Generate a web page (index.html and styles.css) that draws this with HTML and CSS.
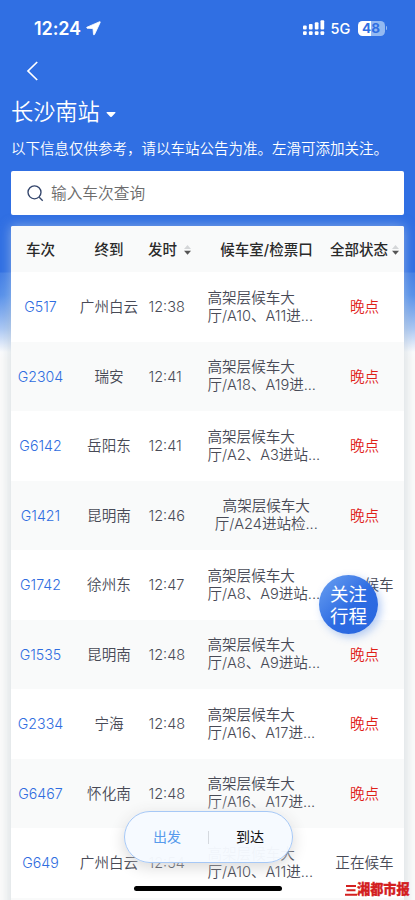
FILE: index.html
```html
<!DOCTYPE html>
<html lang="zh-CN">
<head>
<meta charset="utf-8">
<title>长沙南站</title>
<link rel="stylesheet" href="styles.css">
</head>
<body>
<div class="screen">
  <header class="top">
    <div class="statusbar">
      <span class="clock">12:24</span>
      <svg class="loc" width="15" height="15" viewBox="0 0 15 15"><path d="M13.6 0.7 L0.9 6.2 Q0.2 6.8 1 7.2 L7 7.6 L7.5 13.6 Q7.9 14.4 8.5 13.6 L14.2 1.4 Q14.4 0.4 13.6 0.7Z" fill="#fff" stroke="#fff" stroke-width=".8"/></svg>
      <svg class="signal" width="22" height="16" viewBox="0 0 22 16" fill="#fff"><rect x="0" y="5.5" width="3.7" height="4" rx="1"/><rect x="5.9" y="4" width="3.7" height="5.5" rx="1"/><rect x="11.8" y="2.2" width="3.7" height="7.3" rx="1"/><rect x="17.5" y="0.3" width="3.7" height="9.2" rx="1"/><rect x="0" y="11.2" width="3.7" height="3.8" rx="1"/><rect x="5.9" y="11.2" width="3.7" height="3.8" rx="1"/><rect x="11.8" y="11.2" width="3.7" height="3.8" rx="1"/><rect x="17.5" y="11.2" width="3.7" height="3.8" rx="1"/></svg>
      <span class="net">5G</span>
      <span class="battery"><b>4</b><b>8</b></span><i class="cap"></i>
    </div>
    <svg class="back" width="13" height="20" viewBox="0 0 13 20"><path d="M11.2 1 L2 10 L11.2 19" fill="none" stroke="#fff" stroke-width="1.7"/></svg>
    <div class="station"><span>长沙南站</span><svg width="10" height="6" viewBox="0 0 10 6"><path d="M1 0H9Q10 .3 9.3 1.1L5.7 4.7Q5 5.2 4.3 4.7L.7 1.1Q0 .3 1 0Z" fill="#fff"/></svg></div>
    <p class="notice">以下信息仅供参考，请以车站公告为准。左滑可添加关注。</p>
    <div class="search">
      <svg width="17" height="17" viewBox="0 0 17 17" fill="none" stroke="#33456b" stroke-width="1.35"><circle cx="7.5" cy="7.3" r="6.5"/><path d="M12.2 12.2L15.7 15.7"/></svg>
      <span>输入车次查询</span>
    </div>
  </header>
  <main class="board">
    <div class="head">
      <span>车次</span><span>终到</span><span class="sortable left">发时<svg class="sort" width="7" height="10" viewBox="0 0 7 10"><path d="M3.5 0L7 4H0Z" fill="#d4d6d8"/><path d="M0 5.7H7L3.5 9.7Z" fill="#555"/></svg></span><span>候车室/检票口</span><span class="sortable state">全部状态<svg class="sort" width="7" height="10" viewBox="0 0 7 10"><path d="M3.5 0L7 4H0Z" fill="#d4d6d8"/><path d="M0 5.7H7L3.5 9.7Z" fill="#555"/></svg></span>
    </div>
    <div class="row"><a>G517</a><span>广州白云</span><time>12:38</time><p>高架层候车大<br>厅/A10、A11进...</p><em>晚点</em></div>
    <div class="row"><a>G2304</a><span>瑞安</span><time>12:41</time><p>高架层候车大<br>厅/A18、A19进...</p><em>晚点</em></div>
    <div class="row"><a>G6142</a><span>岳阳东</span><time>12:41</time><p>高架层候车大<br>厅/A2、A3进站...</p><em>晚点</em></div>
    <div class="row"><a>G1421</a><span>昆明南</span><time>12:46</time><p class="mid">高架层候车大<br>厅/A24进站检...</p><em>晚点</em></div>
    <div class="row"><a>G1742</a><span>徐州东</span><time>12:47</time><p>高架层候车大<br>厅/A8、A9进站...</p><span>正在候车</span></div>
    <div class="row"><a>G1535</a><span>昆明南</span><time>12:48</time><p>高架层候车大<br>厅/A8、A9进站...</p><em>晚点</em></div>
    <div class="row"><a>G2334</a><span>宁海</span><time>12:48</time><p>高架层候车大<br>厅/A16、A17进...</p><em>晚点</em></div>
    <div class="row"><a>G6467</a><span>怀化南</span><time>12:48</time><p>高架层候车大<br>厅/A16、A17进...</p><em>晚点</em></div>
    <div class="row"><a>G649</a><span>广州白云</span><time>12:54</time><p>高架层候车大<br>厅/A10、A11进...</p><span>正在候车</span></div>
    <div class="row"></div>
  </main>
  <div class="follow">关注<br>行程</div>
  <div class="switch"><span class="on">出发</span><i></i><span>到达</span></div>
  <div class="home"></div>
  <div class="brand"><svg width="12" height="11" viewBox="0 0 12 11" fill="#d3201f"><path d="M1 0H11V2H1ZM1.5 4.3H10.5V6.3H1.5ZM0 8.8H12V10.8H0Z"/></svg><span>湘都市报</span></div>
</div>
</body>
</html>
```
FILE: styles.css
```css
* { box-sizing: border-box; }
body { margin: 0; font-family: Inter, "Noto Sans CJK SC", sans-serif; }
.screen {
  position: relative;
  width: 415px;
  height: 900px;
  overflow: hidden;
  background: linear-gradient(#306fe3 0, #306fe3 272px, #447fe6 273px, #5790ea 295px, #a9c7f5 328px, #fbfcfe 352px, #fbfbfb 360px);
}
.top { height: 226px; padding: 0 11px; color: #fff; }
.statusbar { height: 56px; display: flex; align-items: center; padding: 0 17px 0 23px; }
.clock { font-size: 18px; font-weight: 600; letter-spacing: -.1px; width: 48px; white-space: nowrap; }
.loc { margin-left: 4px; }
.signal { margin-left: auto; }
.net { font-size: 14.5px; font-weight: 500; margin-left: 6px; width: 27px; white-space: nowrap; }
.battery {
  width: 27px; height: 15px; border-radius: 4.5px; display: flex; justify-content: center; align-items: center;
  background: linear-gradient(90deg, #fff 48%, #94b9f1 48%);
  color: #306fe3; font-size: 13.5px;
}
.battery b { font-weight: 700; }
.cap { width: 1.5px; height: 4px; background: #94b9f1; margin-left: 1px; border-radius: 0 2px 2px 0; }
.back { display: block; margin: 5px 0 0 15px; }
.station { height: 32px; margin-top: 15px; display: flex; align-items: center; gap: 6px; font-size: 22.2px; font-weight: 350; line-height: 32px; }
.station svg { margin-top: 6px; }
.notice { margin: 12px 0 0; height: 20px; line-height: 18px; font-size: 14.5px; font-weight: 350; white-space: nowrap; }
.search { height: 44px; margin-top: 11px; background: #fff; border-radius: 2px; display: flex; align-items: center; padding-left: 16px; gap: 7px; color: #6c6c6c; font-size: 15.7px; font-weight: 350; }
.search span { margin-top: -1px; }
.board {
  width: 393px;
  margin-left: 11px;
  border-radius: 2px 2px 0 0;
  background: #fff;
  box-shadow: 0 0 12px rgba(205, 220, 228, .55), 0 80px 14px rgba(0, 0, 0, .1);
}
.head, .row { display: grid; grid-template-columns: 59px 78px 60px 117px 79px; align-items: center; justify-items: center; white-space: nowrap; }
.head { height: 46px; padding-bottom: 1px; background: #f9fafa; color: #2a2a2a; font-size: 14.5px; font-weight: 500; border-radius: 2px 2px 0 0; }
.sortable { display: flex; align-items: center; }
.sort { margin: 2px 0 0 7px; }
.state .sort { margin-left: 4px; }
.left, .row time { justify-self: start; }
.row { height: 69.5px; color: #484a56; font-size: 14.6px; font-weight: 350; }
.row:nth-child(odd) { background: #f9fafa; }
.row time { padding-left: .5px; font-size: 14.5px; }
.row a { color: #2f6de0; font-size: 14.2px; }
.row span, .row em { padding-bottom: 2px; }
.row p { margin: 0 0 0 -.5px; line-height: 18px; justify-self: start; letter-spacing: -.05px; }
.row .mid { justify-self: center; text-align: center; }
.row em { font-style: normal; color: #df2018; }
.follow {
  position: absolute; left: 319px; top: 575px; width: 59px; height: 59px; border-radius: 50%;
  background: linear-gradient(135deg, #6ca2f2, #2d6be2 55%, #2866df);
  box-shadow: 3px 3px 9px rgba(47, 111, 227, .35);
  color: #fff; text-align: center; font-size: 18.5px; line-height: 21.5px; padding-top: 9px;
}
.switch {
  position: absolute; left: 124px; top: 811px; width: 169px; height: 52px; border-radius: 26px;
  border: 1px solid #a6c8f6; background: rgba(246, 250, 255, .97);
  box-shadow: 0 4px 16px rgba(0, 0, 0, .16), 0 0 9px 4px rgba(255, 255, 255, .5);
  display: flex; align-items: center; justify-content: center; gap: 27px; font-size: 14px; color: #111;
}
.switch span { padding-bottom: 2px; }
.switch i { width: 1px; height: 13px; background: #d5d9df; }
.switch .on { color: #579aec; }
.home { position: absolute; left: 134px; top: 886px; width: 148px; height: 5px; border-radius: 3px; background: #000; }
.brand { position: absolute; left: 345px; top: 882px; height: 15px; display: flex; align-items: center; color: #d3201f; font-size: 13.2px; font-weight: 900; line-height: 15px; -webkit-text-stroke: .3px #d3201f; }
.brand svg { margin-top: 2px; }
```
